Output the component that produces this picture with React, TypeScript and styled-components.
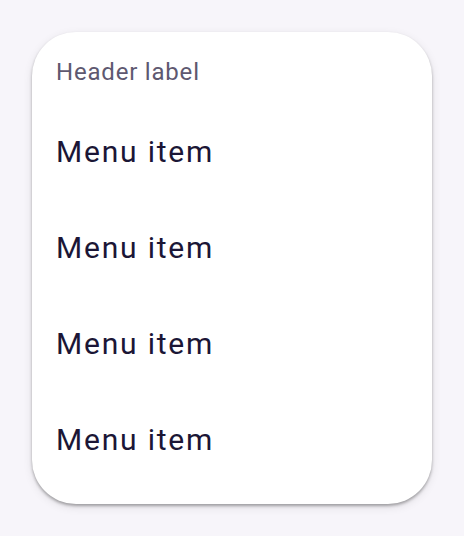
import styled, { createGlobalStyle } from "styled-components";

const GlobalStyle = createGlobalStyle`
    html, body {
        margin: 0;
        padding: 0;
        background-color: #f7f5fa;
        font-family: Roboto, "Liberation Sans", sans-serif;
    }
`;

const StyledPage = styled.div`
    width: 464px;
    height: 536px;
    padding: 32px;
    box-sizing: border-box;
`;

const StyledMenu = styled.div`
    width: 400px;
    height: 472px;
    box-sizing: border-box;
    padding: 16px 0;
    background-color: #ffffff;
    border-radius: 44px;
    box-shadow: 0 2px 3px rgba(0, 0, 0, 0.3), 0 3px 10px rgba(0, 0, 0, 0.1);
    display: flex;
    flex-direction: column;
`;

const StyledHeader = styled.div`
    height: 48px;
    margin-bottom: 7px;
    padding: 0 24px;
    display: flex;
    align-items: center;
    font-size: 24px;
    letter-spacing: 0.8px;
    color: #5e5870;
`;

const StyledItem = styled.div`
    height: 96px;
    padding: 0 24px;
    display: flex;
    align-items: center;
    font-size: 30px;
    letter-spacing: 1.8px;
    color: #1b1636;
    cursor: pointer;
`;

const items = ["Menu item", "Menu item", "Menu item", "Menu item"];

const App = () => {
    return (
        <>
            <GlobalStyle />
            <StyledPage>
                <StyledMenu>
                    <StyledHeader>Header label</StyledHeader>
                    {items.map((label, i) => (
                        <StyledItem key={i}>{label}</StyledItem>
                    ))}
                </StyledMenu>
            </StyledPage>
        </>
    );
};

export default App;
